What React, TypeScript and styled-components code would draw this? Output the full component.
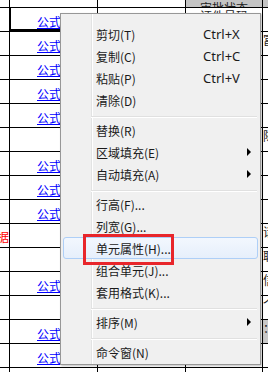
import React from 'react';
import styled, { createGlobalStyle } from 'styled-components';

const GlobalStyle = createGlobalStyle`
  html, body {
    margin: 0;
    padding: 0;
    background: #fff;
  }
  body {
    width: 268px;
    height: 372px;
    overflow: hidden;
    font-family: "Noto Sans CJK SC", "Noto Sans", sans-serif;
  }
`;

type Row = {
  link?: boolean;
  selected?: boolean;
  mark?: string;
  note?: string;
  side?: string;
  sideGray?: boolean;
};

const rows: Row[] = [
  { link: true, selected: true, note: '证件号码' },
  { link: true, side: '富' },
  { link: true },
  { link: true },
  { link: true },
  { side: '陈' },
  { link: true },
  { link: true },
  { link: true },
  { mark: '数据', side: '请' },
  { side: '职' },
  { link: true, side: '信' },
  { side: '个' },
  { link: true, sideGray: true, side: '：' },
  { link: true },
  {},
];

type MenuEntry =
  | { sep: true }
  | { label: string; key?: string; sub?: boolean; active?: boolean };

const menu: MenuEntry[] = [
  { label: '剪切(T)', key: 'Ctrl+X' },
  { label: '复制(C)', key: 'Ctrl+C' },
  { label: '粘贴(P)', key: 'Ctrl+V' },
  { label: '清除(D)' },
  { sep: true },
  { label: '替换(R)' },
  { label: '区域填充(E)', sub: true },
  { label: '自动填充(A)', sub: true },
  { sep: true },
  { label: '行高(F)...' },
  { label: '列宽(G)...' },
  { label: '单元属性(H)...', active: true },
  { label: '组合单元(J)...' },
  { label: '套用格式(K)...' },
  { sep: true },
  { label: '排序(M)', sub: true },
  { sep: true },
  { label: '命令窗(N)' },
];

const App = () => {
  return (
    <Screen>
      <GlobalStyle />
      <Sheet>
        <SheetRow $h={8}>
          <Cell $w={10} />
          <Cell $w={88} />
          <Cell $w={88} />
          <HeadCell $w={77}>
            <CutText>审批状态</CutText>
          </HeadCell>
          <HeadCell $w={20} />
        </SheetRow>
        {rows.map((r, i) => (
          <SheetRow key={i} $h={24}>
            <MarkCell $w={10}>{r.mark}</MarkCell>
            <LinkCell $w={88} $selected={r.selected}>
              {r.link && <Link>公式</Link>}
            </LinkCell>
            <Cell $w={88} />
            <NoteCell $w={77}>{r.note}</NoteCell>
            <SideCell $w={20} $gray={r.sideGray}>
              {r.side}
            </SideCell>
          </SheetRow>
        ))}
      </Sheet>

      <Menu>
        {menu.map((m, i) =>
          'sep' in m ? (
            <Separator key={i} />
          ) : (
            <Item key={i} $active={m.active}>
              <Label>{m.label}</Label>
              <Shortcut>{m.key}</Shortcut>
              {m.sub ? <Arrow /> : <span />}
            </Item>
          )
        )}
      </Menu>
      <Callout />
    </Screen>
  );
};

const Screen = styled.div`
  position: relative;
  width: 268px;
  height: 372px;
  overflow: hidden;
  background: #fff;
`;

const Sheet = styled.div`
  display: flex;
  flex-direction: column;
`;

const SheetRow = styled.div<{ $h: number }>`
  display: flex;
  height: ${(p) => p.$h}px;
  flex-shrink: 0;
`;

const Cell = styled.div<{ $w: number }>`
  box-sizing: border-box;
  width: ${(p) => p.$w}px;
  flex-shrink: 0;
  height: 100%;
  border-right: 1px solid #000;
  border-bottom: 1px solid #000;
  overflow: hidden;
  font-size: 12px;
  white-space: nowrap;
`;

const HeadCell = styled(Cell)`
  background: #c4c4c4;
  display: flex;
  align-items: flex-end;
  justify-content: center;
`;

const CutText = styled.span`
  color: #222;
  line-height: 14px;
  margin-bottom: -8px;
`;

const MarkCell = styled(Cell)`
  display: flex;
  justify-content: flex-end;
  align-items: center;
  color: #f00;
  line-height: 14px;
  padding-top: 3px;
`;

const LinkCell = styled(Cell)<{ $selected?: boolean }>`
  display: flex;
  align-items: center;
  padding-left: 27px;
  padding-top: 4px;
  box-shadow: ${(p) =>
    p.$selected ? 'inset 1px 0 0 #000, inset 0 -2px 0 #000' : 'none'};
`;

const Link = styled.span`
  color: #0000ff;
  text-decoration: underline;
  line-height: 14px;
`;

const NoteCell = styled(Cell)`
  text-align: center;
  color: #222;
  line-height: 14px;
  padding-top: 1px;
`;

const SideCell = styled(Cell)<{ $gray?: boolean }>`
  background: ${(p) => (p.$gray ? '#c8c8c8' : '#fff')};
  color: #222;
  line-height: 14px;
  padding-top: 1px;
`;

const Menu = styled.div`
  position: absolute;
  left: 60px;
  top: 13px;
  width: 201px;
  box-sizing: border-box;
  padding: 9px 0 1px;
  border: 1px solid #979797;
  background:
    linear-gradient(
      to right,
      transparent 30px,
      #e2e3e3 30px,
      #e2e3e3 31px,
      #fff 31px,
      #fff 32px,
      transparent 32px
    ),
    #f0f0f0;
  box-shadow: 1px 1px 2px rgba(0, 0, 0, 0.25);
  display: flex;
  flex-direction: column;
`;

const Item = styled.div<{ $active?: boolean }>`
  box-sizing: border-box;
  height: 22px;
  margin: 0 2px;
  padding-left: 32px;
  display: grid;
  grid-template-columns: 107px 44px 4px;
  align-items: center;
  border: 1px solid ${(p) => (p.$active ? '#aecff7' : 'transparent')};
  border-radius: 3px;
  background: ${(p) =>
    p.$active ? 'linear-gradient(#f2f7fe, #e6effb)' : 'transparent'};
  font-size: 12px;
  color: #1a1a1a;
`;

const Label = styled.span`
  font-family: "Noto Sans CJK SC", "Noto Sans", sans-serif;
  white-space: nowrap;
  line-height: 14px;
  padding-top: 1px;
`;

const Shortcut = styled.span`
  font-family: "Noto Sans", "Liberation Sans", sans-serif;
  font-size: 13px;
  white-space: nowrap;
  line-height: 14px;
`;

const Arrow = styled.span`
  width: 0;
  height: 0;
  border-left: 4px solid #000;
  border-top: 4px solid transparent;
  border-bottom: 4px solid transparent;
`;

const Separator = styled.div`
  height: 8px;
  box-sizing: border-box;
  margin-left: 30px;
  margin-right: 3px;
  padding-top: 5px;
  &::before {
    content: '';
    display: block;
    height: 1px;
    background: #e0e0e0;
    border-bottom: 1px solid #fff;
  }
`;

const Callout = styled.div`
  position: absolute;
  left: 83px;
  top: 234px;
  width: 91px;
  height: 31px;
  box-sizing: border-box;
  border: 3px solid #e8262b;
`;

export default App;
